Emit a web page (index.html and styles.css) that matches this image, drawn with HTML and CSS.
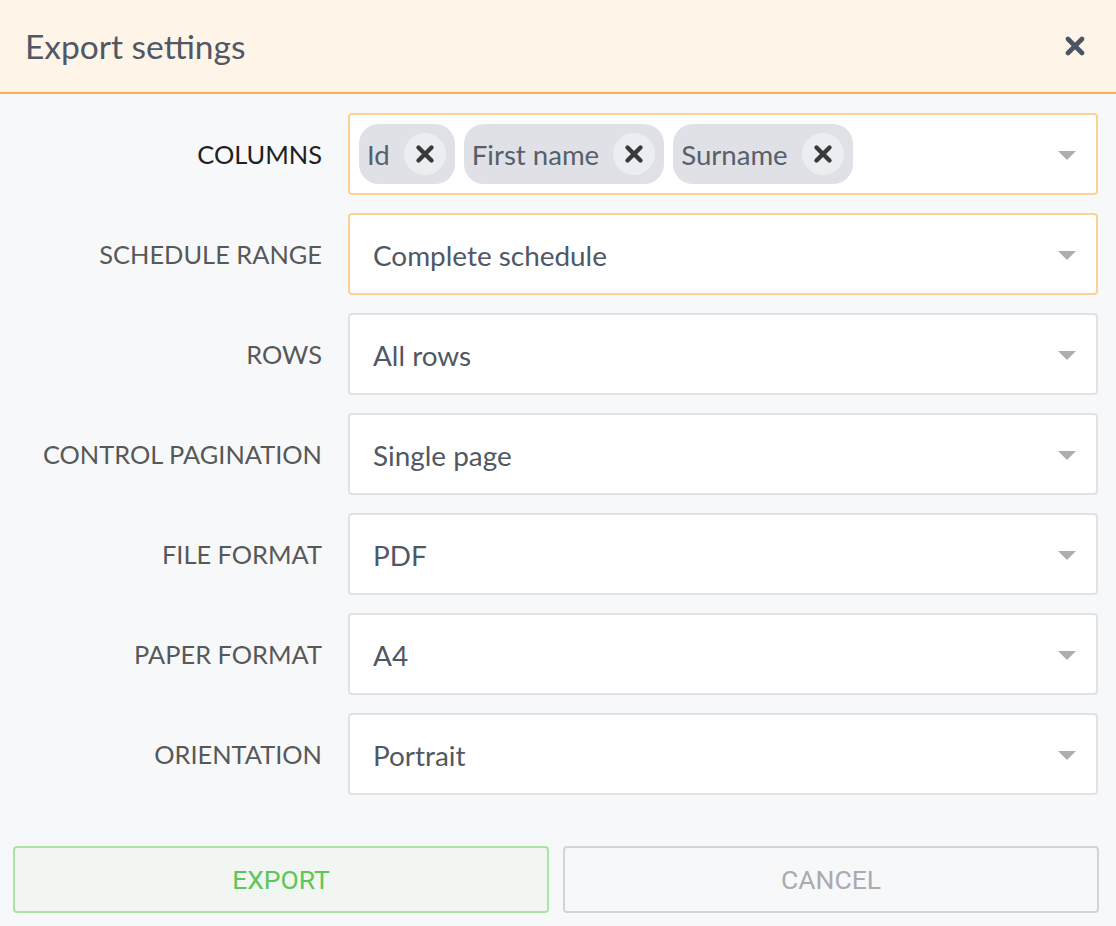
FILE: index.html
```html
<!DOCTYPE html>
<html>
<head>
<meta charset="utf-8">
<link rel="stylesheet" href="styles.css">
</head>
<body>
<div class="dialog">
  <div class="header">
    <div class="title">Export settings</div>
    <svg class="close" width="20" height="20" viewBox="0 0 20 20"><path d="M3 3 L17 17 M17 3 L3 17" stroke="#4b5461" stroke-width="4.6" stroke-linecap="round"/></svg>
  </div>
  <div class="form">
    <div class="label dark">COLUMNS</div>
    <div class="field focus chips-field">
      <div class="chips">
        <div class="chip"><span class="chip-text">Id</span><span class="chip-x"><svg width="20" height="20" viewBox="0 0 20 20"><path d="M3.5 3.5 L16.5 16.5 M16.5 3.5 L3.5 16.5" stroke="#383a3d" stroke-width="4.4" stroke-linecap="round"/></svg></span></div>
        <div class="chip"><span class="chip-text">First name</span><span class="chip-x"><svg width="20" height="20" viewBox="0 0 20 20"><path d="M3.5 3.5 L16.5 16.5 M16.5 3.5 L3.5 16.5" stroke="#383a3d" stroke-width="4.4" stroke-linecap="round"/></svg></span></div>
        <div class="chip"><span class="chip-text">Surname</span><span class="chip-x"><svg width="20" height="20" viewBox="0 0 20 20"><path d="M3.5 3.5 L16.5 16.5 M16.5 3.5 L3.5 16.5" stroke="#383a3d" stroke-width="4.4" stroke-linecap="round"/></svg></span></div>
      </div>
      <span class="arrow"></span>
    </div>

    <div class="label">SCHEDULE RANGE</div>
    <div class="field focus"><span class="value">Complete schedule</span><span class="arrow"></span></div>

    <div class="label">ROWS</div>
    <div class="field"><span class="value">All rows</span><span class="arrow"></span></div>

    <div class="label">CONTROL PAGINATION</div>
    <div class="field"><span class="value">Single page</span><span class="arrow"></span></div>

    <div class="label">FILE FORMAT</div>
    <div class="field"><span class="value">PDF</span><span class="arrow"></span></div>

    <div class="label">PAPER FORMAT</div>
    <div class="field"><span class="value">A4</span><span class="arrow"></span></div>

    <div class="label">ORIENTATION</div>
    <div class="field"><span class="value">Portrait</span><span class="arrow"></span></div>
  </div>
  <div class="footer">
    <button class="btn export">EXPORT</button>
    <button class="btn cancel">CANCEL</button>
  </div>
</div>
</body>
</html>
```
FILE: styles.css
```css
html, body {
  margin: 0;
  padding: 0;
  background: #f7f8fa;
  font-family: Lato, "Open Sans", sans-serif;
}
.dialog {
  width: 1116px;
  height: 926px;
  display: flex;
  flex-direction: column;
}
.header {
  height: 94px;
  box-sizing: border-box;
  background: #fff4e8;
  border-bottom: 2px solid #f6b24f;
  display: flex;
  align-items: center;
  justify-content: space-between;
  padding: 0 31px 0 25px;
  flex-shrink: 0;
}
.title {
  font-size: 33.5px;
  color: #4f5864;
}
.close {
  display: block;
}
.form {
  display: grid;
  grid-template-columns: 322px 750px;
  column-gap: 26px;
  row-gap: 18px;
  padding-top: 19px;
  grid-auto-rows: 82px;
}
.label {
  font-size: 25.4px;
  color: #585858;
  text-align: right;
  display: flex;
  align-items: center;
  justify-content: flex-end;
}
.label.dark {
  color: #202020;
}
.field {
  background: #fff;
  border: 2px solid #e1e2e5;
  border-radius: 4px;
  box-sizing: border-box;
  display: flex;
  align-items: center;
  padding: 0 20px 0 23px;
}
.field.focus {
  border-color: #fcd292;
}
.value {
  flex: 1;
  font-size: 27.9px;
  color: #4f5864;
  padding-top: 1px;
}
.arrow {
  width: 0;
  height: 0;
  border-left: 9px solid transparent;
  border-right: 9px solid transparent;
  border-top: 9px solid #acadb0;
  margin-top: 2px;
}
.chips-field {
  padding-left: 9px;
}
.chips {
  flex: 1;
  display: flex;
  gap: 9px;
}
.chip {
  height: 60px;
  background: #e0e1e6;
  border-radius: 20px;
  display: flex;
  align-items: center;
  padding: 0 9px 0 8px;
}
.chip-text {
  font-size: 27.6px;
  color: #56606b;
  margin-right: 14px;
}
.chip-x {
  width: 42px;
  height: 42px;
  border-radius: 50%;
  background: #ecedf1;
  display: flex;
  align-items: center;
  justify-content: center;
}
.chip-x svg {
  display: block;
}
.footer {
  display: flex;
  gap: 14px;
  padding: 51px 17px 0 13px;
}
.btn {
  flex: 1;
  height: 67px;
  border-radius: 4px;
  font-family: Roboto, sans-serif;
  font-size: 26.5px;
  box-sizing: border-box;
  padding: 0;
}
.export {
  background: #f1f6f2;
  border: 2px solid #ade2a6;
  color: #5cc657;
}
.cancel {
  background: #f7f8fa;
  border: 2px solid #d3d4d7;
  color: #aaabaf;
}
```
